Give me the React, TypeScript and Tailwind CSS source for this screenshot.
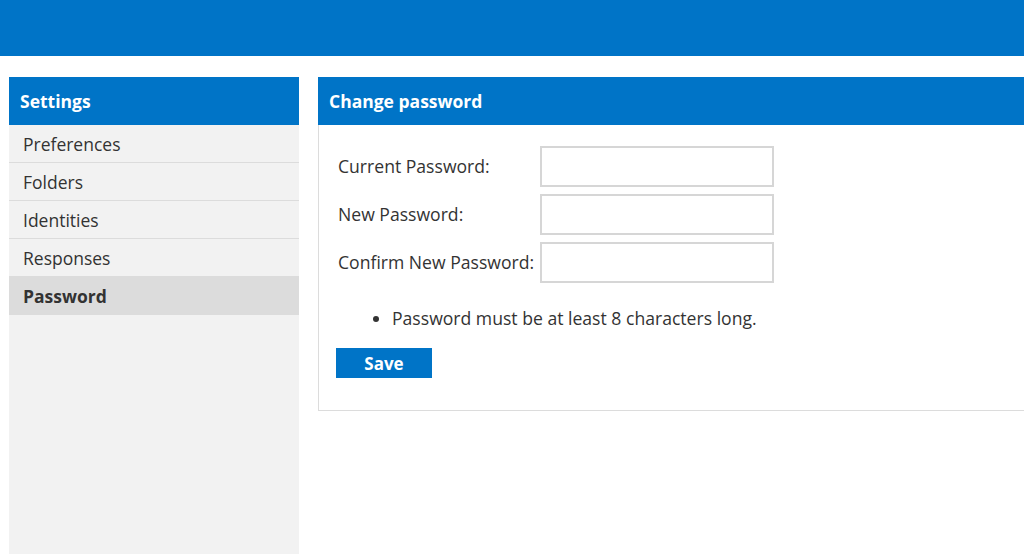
const items = ['Preferences', 'Folders', 'Identities', 'Responses', 'Password'];

export default function App() {
  return (
    <div
      className="w-[1024px] h-[554px] overflow-hidden bg-white flex flex-col"
      style={{ fontFamily: '"Open Sans", "Noto Sans", sans-serif' }}
    >
      <div className="h-[56px] shrink-0 bg-[#0074c7]" />
      <div className="flex flex-1 gap-[19px] pl-[9px] pt-[21px] min-h-0">
        <aside className="w-[290px] shrink-0 bg-[#f2f2f2] flex flex-col">
          <div className="h-[48px] bg-[#0074c7] flex items-center px-[11px] text-white text-[17.5px] font-bold">
            Settings
          </div>
          {items.map((item) => (
            <div
              key={item}
              className={
                item === 'Password'
                  ? 'h-[38px] flex items-center px-[14px] text-[17.5px] text-[#333] font-bold bg-[#dcdcdc]'
                  : 'h-[38px] flex items-center px-[14px] pt-[2px] text-[17.5px] text-[#333] border-b border-[#dcdcdc]'
              }
            >
              {item}
            </div>
          ))}
        </aside>
        <main className="w-[760px] shrink-0 self-start">
          <div className="h-[48px] bg-[#0074c7] flex items-center px-[11px] text-white text-[17.5px] font-bold">
            Change password
          </div>
          <div className="border border-t-0 border-[#dcdcdc] pl-[17px] pt-[21px] pb-[32px]">
            <div className="flex flex-col gap-[7px]">
              {['Current Password:', 'New Password:', 'Confirm New Password:'].map((label) => (
                <div key={label} className="flex items-center">
                  <label className="w-[204px] pl-[2px] text-[17.6px] text-[#333] whitespace-nowrap">{label}</label>
                  <input
                    type="password"
                    className="w-[234px] h-[41px] border-2 border-[#d6d6d6] bg-white outline-none"
                  />
                </div>
              ))}
            </div>
            <ul className="list-disc pl-[56px] mt-[22px] text-[17.6px] leading-[26px] text-[#333]">
              <li>Password must be at least 8 characters long.</li>
            </ul>
            <button className="mt-[17px] w-[96px] h-[30px] bg-[#0074c7] text-white text-[17px] font-bold leading-none">
              Save
            </button>
          </div>
        </main>
      </div>
    </div>
  );
}
